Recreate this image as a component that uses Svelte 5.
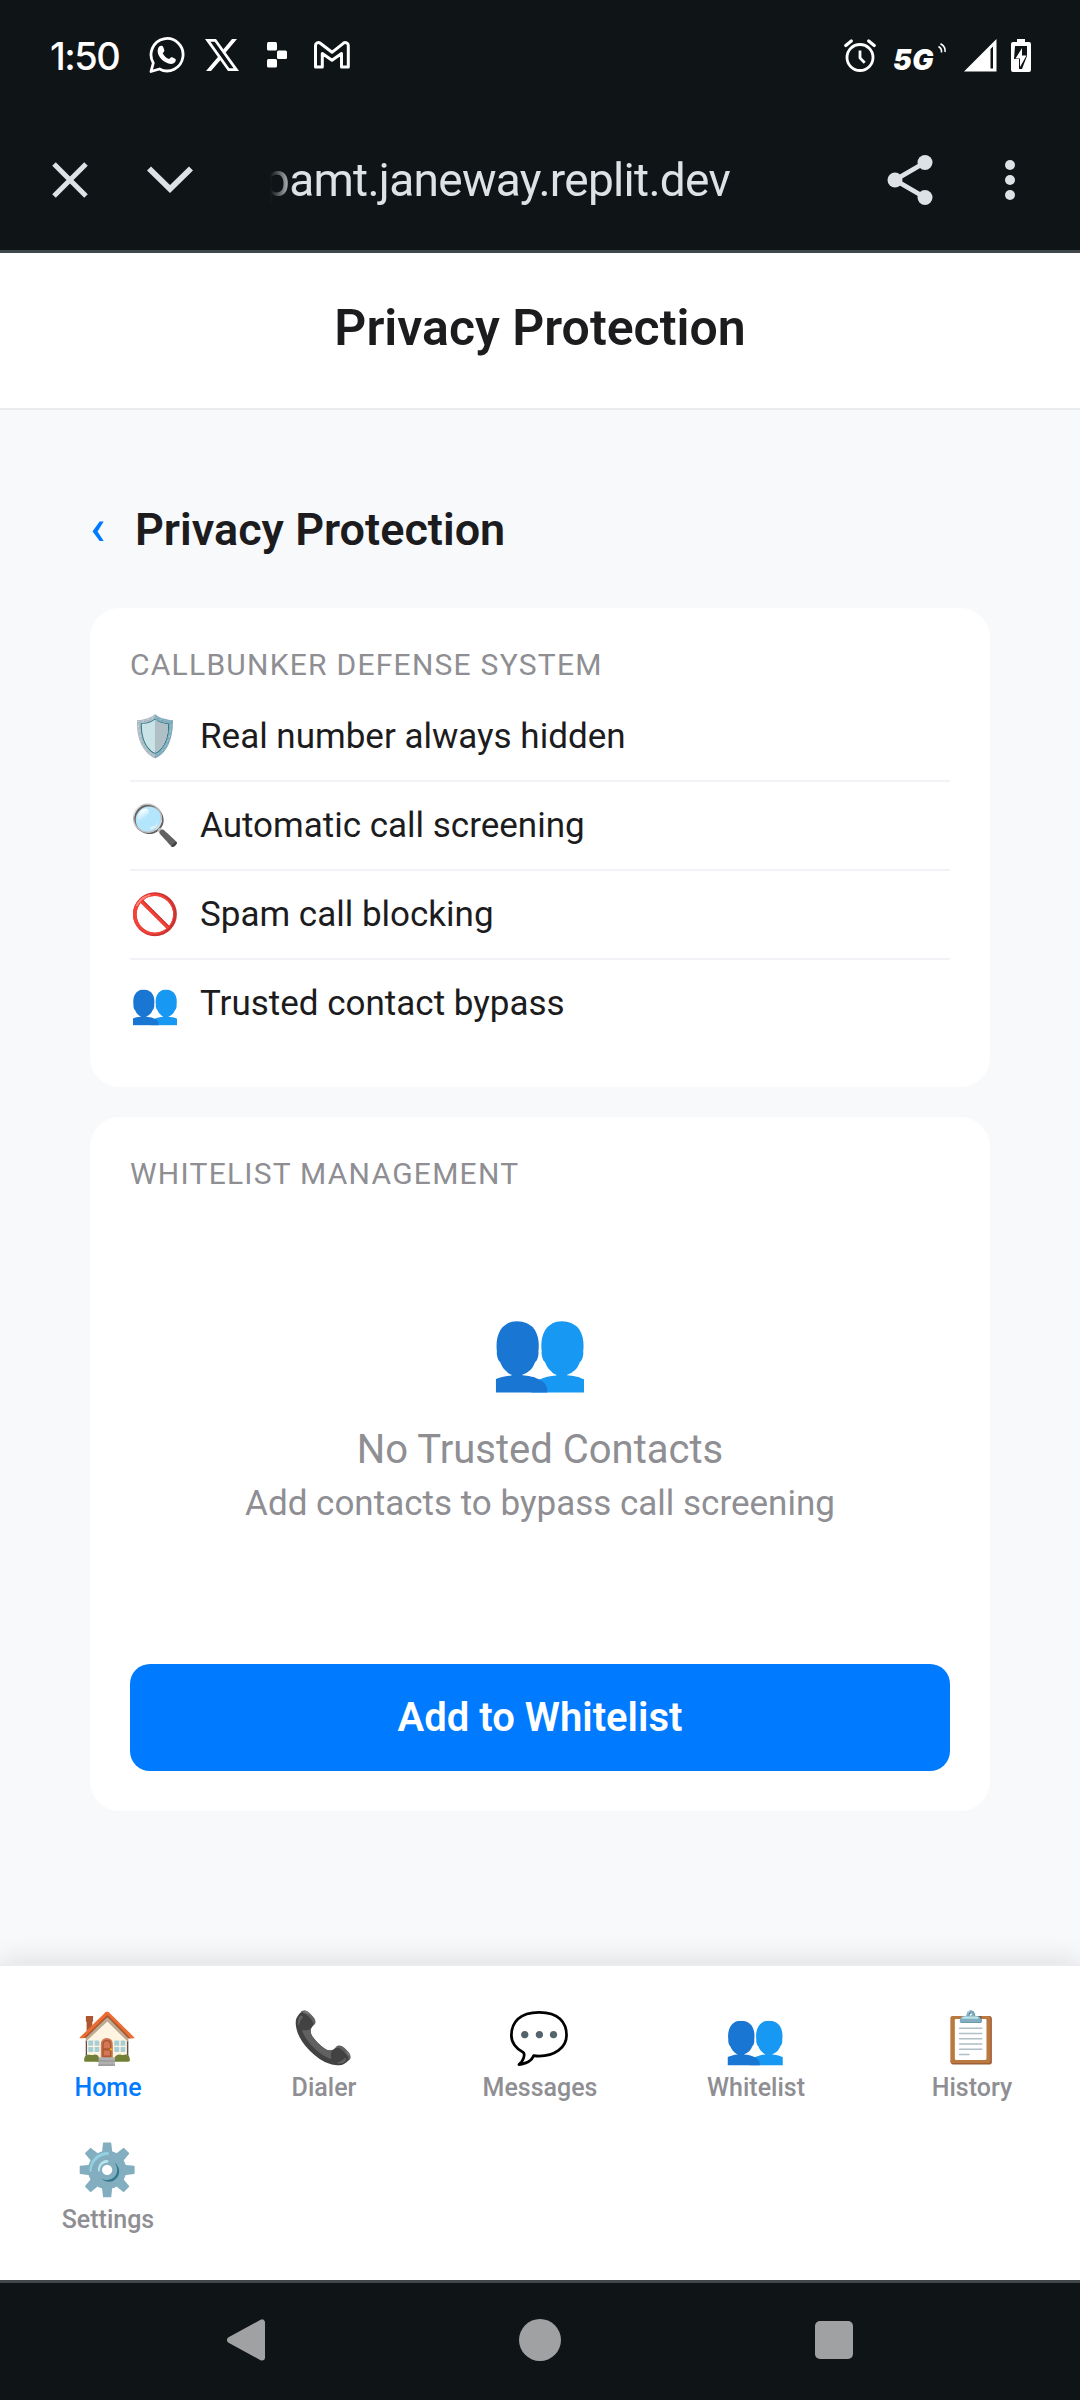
<script>
  const features = [
    { icon: '🛡️', label: 'Real number always hidden' },
    { icon: '🔍', label: 'Automatic call screening' },
    { icon: '🚫', label: 'Spam call blocking' },
    { icon: '👥', label: 'Trusted contact bypass' },
  ];
  const tabs = [
    { icon: '🏠', label: 'Home', active: true },
    { icon: '📞', label: 'Dialer' },
    { icon: '💬', label: 'Messages' },
    { icon: '👥', label: 'Whitelist' },
    { icon: '📋', label: 'History' },
    { icon: '⚙️', label: 'Settings' },
  ];
</script>

<div class="screen">
  <div class="status">
    <span class="clock">1:50</span>
    <svg class="wa" width="36" height="38" viewBox="0 0 36 38" fill="none">
      <path d="M2 35.5 4.300 27A16 16.2 0 1 1 10.500 33Z" stroke="#fff" stroke-width="2.800" stroke-linejoin="round" />
      <path d="M10.500 10.200c1.500-1 3.200-.6 3.700.8l1.100 3c.3 1-.3 1.900-1.600 3.200 1.600 3 3.600 4.800 6.500 5.900 1.300-1.600 2-2.200 3-1.800l3 1.500c1 .6.800 2.300-.3 3.500-2.200 2.300-5.600 2-9.800-.3-4.100-2.400-7-6.500-7.400-10-.2-2.600.5-4.700 1.800-5.800Z" fill="#fff" />
    </svg>
    <svg class="x" width="34" height="32" viewBox="0 0 34 32">
      <path d="M0 0h11L34 32H23Z M5.400 2.800 24.300 29.200h4.300L9.700 2.800Z" fill="#fff" fill-rule="evenodd" />
      <path d="M27 0h5L19.800 14.500 17.400 11.600ZM1 32h5L16.800 19.400l-2.400-3.200Z" fill="#fff" />
    </svg>
    <svg class="rp" width="20" height="26" viewBox="0 0 20 26" fill="#fff">
      <rect width="10" height="8.500" rx="1.500" /><rect x="10" y="8.500" width="10" height="8.500" rx="1.500" /><rect y="17" width="10" height="8.500" rx="1.500" />
    </svg>
    <svg class="gm" width="36" height="28" viewBox="0 0 36 28" fill="none" stroke="#fff" stroke-width="3" stroke-linejoin="round">
      <path d="M1.500 4.500C1.500 1.800 4.300.8 6.300 2.300L18 11.300 29.300 2.300c2-1.500 5-.5 5 2.200V26H27.500V12.500L18 19.200 8.300 12.500V26H1.500Z" />
    </svg>
    <span class="grow"></span>
    <svg class="al" width="32" height="33" viewBox="0 0 32 33" fill="none" stroke="#fff" stroke-linecap="round">
      <circle cx="16" cy="18.500" r="13" stroke-width="2.800" />
      <path d="M1.800 6.500 7.300 2M30.200 6.500 24.700 2" stroke-width="3.200" />
      <path d="M16 11.500v7.500l4.700 4.700" stroke-width="2.800" stroke-linecap="butt" />
    </svg>
    <span class="fiveg">5G</span>
    <svg class="wv" width="9" height="10" viewBox="0 0 9 10" fill="none" stroke="#fff" stroke-width="1.600">
      <path d="M.5 3.500Q4 5.500 3.500 9.500M2.500.8Q8 4 7 9" />
    </svg>
    <svg class="sg" width="33" height="33" viewBox="0 0 33 33">
      <path d="M0 32.500 32.500 0V32.500ZM26.500 10V29.500H29V7.500Z" fill="#fff" fill-rule="evenodd" />
    </svg>
    <svg class="bt" width="20" height="33" viewBox="0 0 20 33">
      <path d="M6 0h8v3h4a2 2 0 0 1 2 2V31a2 2 0 0 1-2 2H2a2 2 0 0 1-2-2V5a2 2 0 0 1 2-2h4Z" fill="#fff" />
      <path d="M4 7h12v10l-5 13H8V20H3Z" fill="#0f1416" />
      <path d="M11 9 4.500 19.500H9V28L15.500 16.500H11Z" fill="#fff" />
    </svg>
  </div>

  <div class="browser">
    <svg class="close" width="36" height="36" viewBox="0 0 36 36"><path d="m2 2 32 32M34 2 2 34" stroke="#dee1e6" stroke-width="5" /></svg>
    <svg class="down" width="46" height="28" viewBox="0 0 46 28" fill="none"><path d="m2 2.500 21 20.500L44 2.500" stroke="#dee1e6" stroke-width="5.800" /></svg>
    <span class="url">pamt.janeway.replit.dev</span>
    <span class="grow"></span>
    <svg class="share" width="46" height="52" viewBox="0 0 46 52" fill="#dee1e6">
      <path d="M38 8.500 8 26l30 17.500" fill="none" stroke="#dee1e6" stroke-width="4.800" />
      <circle cx="38" cy="8.500" r="7.500" /><circle cx="8" cy="26" r="7.500" /><circle cx="38" cy="43.500" r="7.500" />
    </svg>
    <svg class="more" width="10" height="42" viewBox="0 0 10 42" fill="#dee1e6"><circle cx="5" cy="6" r="5" /><circle cx="5" cy="21" r="5" /><circle cx="5" cy="36" r="5" /></svg>
  </div>

  <header>Privacy Protection</header>

  <main>
    <div class="heading"><span class="back">‹</span><h2>Privacy Protection</h2></div>
    <section class="card one">
      <h3>CALLBUNKER DEFENSE SYSTEM</h3>
      {#each features as f}
        <div class="row"><span class="emoji">{f.icon}</span><span class="label">{f.label}</span></div>
      {/each}
    </section>
    <section class="card two">
      <h3>WHITELIST MANAGEMENT</h3>
      <div class="empty">
        <div class="big">👥</div>
        <p class="t1">No Trusted Contacts</p>
        <p class="t2">Add contacts to bypass call screening</p>
      </div>
      <button>Add to Whitelist</button>
    </section>
  </main>

  <nav>
    {#each tabs as t}
      <div class="tab" class:active={t.active}><span class="ic">{t.icon}</span><span class="tl">{t.label}</span></div>
    {/each}
  </nav>

  <div class="sys">
    <svg width="38" height="42" viewBox="0 0 38 42"><path d="M3 21 35 3.500V38.500Z" fill="#a0a1a3" stroke="#a0a1a3" stroke-width="6" stroke-linejoin="round" /></svg>
    <svg width="42" height="42" viewBox="0 0 42 42"><circle cx="21" cy="21" r="21" fill="#a0a1a3" /></svg>
    <svg width="38" height="38" viewBox="0 0 38 38"><rect width="38" height="38" rx="5" fill="#a0a1a3" /></svg>
  </div>
</div>

<style>
  :global(body) { margin: 0; background: #f8f9fb; }
  * { box-sizing: border-box; }
  .screen { width: 1080px; height: 2400px; display: flex; flex-direction: column; overflow: hidden; background: #f8f9fb; font-family: Roboto, "Noto Color Emoji", sans-serif; color: #1c1c1e; }
  svg { display: block; flex: none; }
  .grow { flex: 1; }
  .status { height: 110px; background: #0f1416; display: flex; align-items: center; padding: 0 49px 0 50px; flex: none; }
  .clock { font: 450 38px/44px Inter, sans-serif; color: #fff; width: 99px; letter-spacing: -1.5px; margin-top: 2px; }
  .x { margin-left: 20px; }
  .rp { margin-left: 28px; }
  .gm { margin-left: 27px; }
  .fiveg { font: italic 900 28px/30px Inter, sans-serif; color: #fff; margin: 9px 0 0 17px; width: 45px; letter-spacing: 0.5px; }
  .wv { margin: -14px 0 0 0; }
  .sg { margin-left: 17px; }
  .bt { margin-left: 14px; }
  .browser { height: 143px; background: #0f1416; border-bottom: 3px solid #41484c; display: flex; align-items: center; padding: 0 65px 0 52px; flex: none; }
  .down { margin-left: 59px; }
  .url { margin-left: 71px; font: 400 46px/60px Roboto, sans-serif; letter-spacing: -0.7px; color: #dee1e6; -webkit-mask-image: linear-gradient(90deg, transparent 6px, #000 30px); }
  .more { margin-left: 72px; }
  header { height: 157px; flex: none; background: #fff; border-bottom: 2px solid #ebecef; text-align: center; font-weight: 600; font-size: 50px; line-height: 60px; padding-top: 45px; }
  main { flex: 1; padding: 79px 90px 0; }
  .heading { display: flex; height: 80px; align-items: center; margin-bottom: 39px; }
  .back { width: 45px; color: #007aff; font-size: 50px; font-weight: 500; line-height: 60px; margin-top: -4px; }
  h2 { margin: 0; font-size: 45px; font-weight: 600; }
  h3 { margin: 0 0 2px; font-weight: 400; font-size: 30px; line-height: 33px; letter-spacing: 1.25px; color: #8e8e93; }
  .card { background: #fff; border-radius: 30px; padding: 40px; }
  .one { height: 479px; margin-bottom: 30px; }
  .one h3 { margin-bottom: 12px; }
  .two { height: 694px; }
  .row { height: 89px; border-bottom: 2px solid #f2f2f7; display: flex; align-items: center; }
  .row:last-child { height: 87px; border: 0; }
  .emoji { font-size: 40px; width: 70px; }
  .label { font-size: 35px; }
  .empty { height: 472px; text-align: center; color: #8e8e93; padding-top: 107px; }
  .big { font-size: 80px; line-height: 100px; height: 121px; }
  .t1 { margin: 0; font-size: 40px; line-height: 60px; }
  .t2 { margin: 0; font-size: 35px; line-height: 48px; }
  button { display: block; width: 820px; height: 107px; border: 0; border-radius: 20px; background: #007aff; color: #fff; font: 600 40px Roboto, sans-serif; }
  nav { height: 316px; flex: none; background: #fff; border-top: 2px solid #ebecef; box-shadow: 0 -5px 25px rgba(0,0,0,.1); display: grid; grid-template-columns: repeat(5, 216px); grid-auto-rows: 132px; padding-top: 38px; }
  .tab { display: flex; flex-direction: column; align-items: center; color: #8e8e93; }
  .active { color: #007aff; }
  .ic { font-size: 50px; line-height: 68px; height: 68px; }
  .tl { font-size: 25px; font-weight: 500; line-height: 32px; }
  .sys { height: 120px; flex: none; background: #0f1416; border-top: 3px solid #41484c; display: flex; justify-content: space-between; align-items: center; padding: 0 227px 3px; }
</style>
